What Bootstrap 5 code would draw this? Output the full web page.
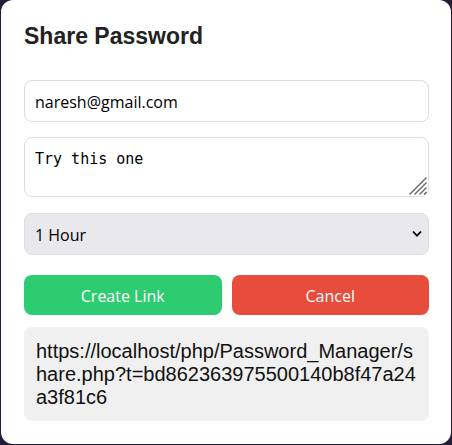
<!DOCTYPE html>
<html lang="en">
<head>
<meta charset="utf-8">
<meta name="viewport" content="width=device-width, initial-scale=1">
<title>Share Password</title>
<link href="https://cdn.jsdelivr.net/npm/bootstrap@5.3.0/dist/css/bootstrap.min.css" rel="stylesheet">
<style>
  body { background: #221c38; font-family: "Liberation Sans", Arial, sans-serif; }
  .share-panel { margin: 0 1px 1px; padding: 22px 22px 23px 23px; border-radius: 12px; }
  .share-title { font-size: 23px; line-height: 28px; color: #222; margin-bottom: 30px; }
  .share-form { gap: 15px; }
  .share-field, .share-field:focus { border: 1px solid #ddd; border-radius: 8px; padding: 10px 10px 8px; color: #000; font-family: "Open Sans", Tahoma, sans-serif; font-size: 16px; line-height: 22px; }
  textarea.share-field, textarea.share-field:focus { font-family: "DejaVu Sans Mono", monospace; font-size: 15px; height: 60px; min-height: 60px; }
  textarea.share-field::-webkit-resizer { background: transparent; }
  .share-message { margin-bottom: 1px; }
  .grip { right: 2px; bottom: 2px; pointer-events: none; }
  .share-select, .share-select:focus { background: #e9e8ed; appearance: none; }
  .chevron { right: 7px; top: 17px; pointer-events: none; }
  .share-actions { gap: 10px; padding-top: 5px; }
  .share-btn { flex: 1 1 0; border: 0; border-radius: 8px; padding: 10px 10px 8px; color: #fff; font-family: "Open Sans", Tahoma, sans-serif; font-size: 16px; line-height: 22px; }
  .share-btn:hover { color: #fff; }
  .create { background: #2ecc71; }
  .cancel { background: #e74c3c; }
  .share-link { margin-top: 12px; background: #f0f0f0; border-radius: 8px; padding: 13px 12px 12px; color: #111; font-size: 20px; line-height: 23px; word-break: break-all; }
</style>
</head>
<body>
<main class="share-panel bg-white">
  <h1 class="share-title fw-bold">Share Password</h1>
  <form class="share-form d-flex flex-column" onsubmit="return false">
    <input type="email" class="form-control share-field" aria-label="Email" value="naresh@gmail.com">
    <div class="share-message position-relative d-flex">
      <textarea class="form-control share-field" aria-label="Message">Try this one</textarea>
      <svg class="grip position-absolute" width="18" height="18" viewBox="0 0 18 18" stroke="#666" stroke-width="1.4" aria-hidden="true"><path d="M0.5 17.5 17.5 0.5M5.5 17.5 17.5 5.5M10.5 17.5 17.5 10.5M15 17.5 17.5 15"/></svg>
    </div>
    <div class="position-relative">
      <select class="form-select share-field share-select" aria-label="Link expiry">
        <option>1 Hour</option>
      </select>
      <svg class="chevron position-absolute" width="10" height="8" viewBox="0 0 10 8" fill="none" stroke="#000" stroke-width="1.8" aria-hidden="true"><path d="M1 1.5 5 5.8 9 1.5"/></svg>
    </div>
    <div class="share-actions d-flex">
      <button type="submit" class="btn share-btn create">Create Link</button>
      <button type="button" class="btn share-btn cancel">Cancel</button>
    </div>
  </form>
  <div class="share-link">https://localhost/php/Password_Manager/share.php?t=bd862363975500140b8f47a24a3f81c6</div>
</main>
<script src="https://cdn.jsdelivr.net/npm/bootstrap@5.3.0/dist/js/bootstrap.bundle.min.js"></script>
</body>
</html>
